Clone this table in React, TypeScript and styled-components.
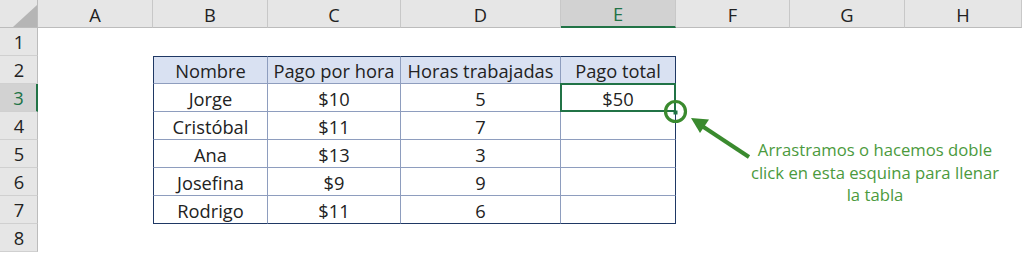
import React from "react";
import styled, { createGlobalStyle, css } from "styled-components";

const GlobalStyle = createGlobalStyle`
  html, body {
    margin: 0;
    padding: 0;
    background: #ffffff;
  }
  body {
    font-family: "Open Sans", "Noto Sans", sans-serif;
    color: #222;
  }
`;

const green = "#217346";
const navy = "#1f3864";
const inner = "#8e9dbe";

const Page = styled.div`
  position: relative;
  width: 1022px;
  height: 255px;
  overflow: hidden;
  background: #fff;
`;

const Sheet = styled.div`
  display: grid;
  grid-template-columns: 38px 115px 115px 133px 160px 115px 114px 115px 117px;
  grid-auto-rows: 28px;
  font-size: 18.3px;
`;

const Corner = styled.div`
  position: relative;
  background: #e6e6e6;
  border-right: 1px solid #bcbcbc;
  border-bottom: 1px solid #bcbcbc;
  box-sizing: border-box;

  &::after {
    content: "";
    position: absolute;
    left: 13px;
    top: 5px;
    width: 24px;
    height: 22px;
    background: #b5b5b5;
    clip-path: polygon(100% 0, 100% 100%, 0 100%);
  }
`;

const ColHead = styled.div<{ $active?: boolean }>`
  display: flex;
  align-items: center;
  justify-content: center;
  box-sizing: border-box;
  background: #e6e6e6;
  border-right: 1px solid #c8c8c8;
  border-bottom: 1px solid #bcbcbc;
  padding-top: 1px;
  ${p =>
    p.$active &&
    css`
      background: #d2d2d2;
      color: ${green};
      border-bottom: 2px solid ${green};
    `}
`;

const RowHead = styled.div<{ $active?: boolean }>`
  display: flex;
  align-items: center;
  justify-content: center;
  box-sizing: border-box;
  background: #e6e6e6;
  border-right: 1px solid #bcbcbc;
  border-bottom: 1px solid #d0d0d0;
  padding-left: 1px;
  ${p =>
    p.$active &&
    css`
      background: #d2d2d2;
      color: ${green};
      border-right: 2px solid ${green};
    `}
`;

type Part = "none" | "head" | "body";

const Cell = styled.div<{
  $part: Part;
  $left?: boolean;
  $right?: boolean;
  $top?: boolean;
  $bottom?: boolean;
  $selected?: boolean;
}>`
  position: relative;
  display: flex;
  align-items: center;
  justify-content: center;
  box-sizing: border-box;
  padding-top: 1px;
  background: ${p => (p.$part === "head" ? "#d9e1f2" : "#fff")};
  ${p =>
    p.$part !== "none" &&
    css`
      border-right: 1px solid ${p.$right ? navy : inner};
      border-bottom: 1px solid ${p.$bottom ? navy : inner};
      ${p.$left && `border-left: 1px solid ${navy};`}
      ${p.$top && `border-top: 1px solid ${navy};`}
    `}
  ${p =>
    p.$selected &&
    css`
      &::after {
        content: "";
        position: absolute;
        left: -1px;
        top: -1px;
        right: -1px;
        bottom: -1px;
        border: 2px solid ${green};
      }
    `}
`;

const Marker = styled.svg`
  position: absolute;
  left: 655px;
  top: 92px;
`;

const Note = styled.div`
  position: absolute;
  left: 725px;
  top: 139px;
  width: 300px;
  text-align: center;
  font-size: 16.7px;
  line-height: 22.5px;
  color: #4b9a3d;
`;

const letters = ["A", "B", "C", "D", "E", "F", "G", "H"];

const rows: string[][] = [
  ["Nombre", "Pago por hora", "Horas trabajadas", "Pago total"],
  ["Jorge", "$10", "5", "$50"],
  ["Cristóbal", "$11", "7", ""],
  ["Ana", "$13", "3", ""],
  ["Josefina", "$9", "9", ""],
  ["Rodrigo", "$11", "6", ""],
];

const App: React.FC = () => {
  const lines = [1, 2, 3, 4, 5, 6, 7, 8];
  return (
    <Page>
      <GlobalStyle />
      <Sheet>
        <Corner />
        {letters.map(l => (
          <ColHead key={l} $active={l === "E"}>
            {l}
          </ColHead>
        ))}
        {lines.map(n => {
          const data = n >= 2 && n <= 7 ? rows[n - 2] : null;
          return (
            <React.Fragment key={n}>
              <RowHead $active={n === 3}>{n}</RowHead>
              {letters.map((l, i) => {
                const inTable = data && i >= 1 && i <= 4;
                return (
                  <Cell
                    key={l}
                    $part={inTable ? (n === 2 ? "head" : "body") : "none"}
                    $left={i === 1}
                    $right={i === 4}
                    $top={n === 2}
                    $bottom={n === 7}
                    $selected={n === 3 && l === "E"}
                  >
                    {inTable ? data[i - 1] : ""}
                  </Cell>
                );
              })}
            </React.Fragment>
          );
        })}
      </Sheet>
      <Marker width="100" height="70" viewBox="0 0 100 70">
        <circle cx="20.5" cy="19.5" r="10" fill="none" stroke="#3a8a2e" strokeWidth="3.2" />
        <rect x="18.5" y="18.5" width="4" height="4" fill={green} />
        <line x1="94" y1="65" x2="44" y2="32" stroke="#3a8a2e" strokeWidth="4" />
        <polygon points="36,26 54,27.5 45,41" fill="#3a8a2e" />
      </Marker>
      <Note>
        Arrastramos o hacemos doble
        <br />
        click en esta esquina para llenar
        <br />
        la tabla
      </Note>
    </Page>
  );
};

export default App;
